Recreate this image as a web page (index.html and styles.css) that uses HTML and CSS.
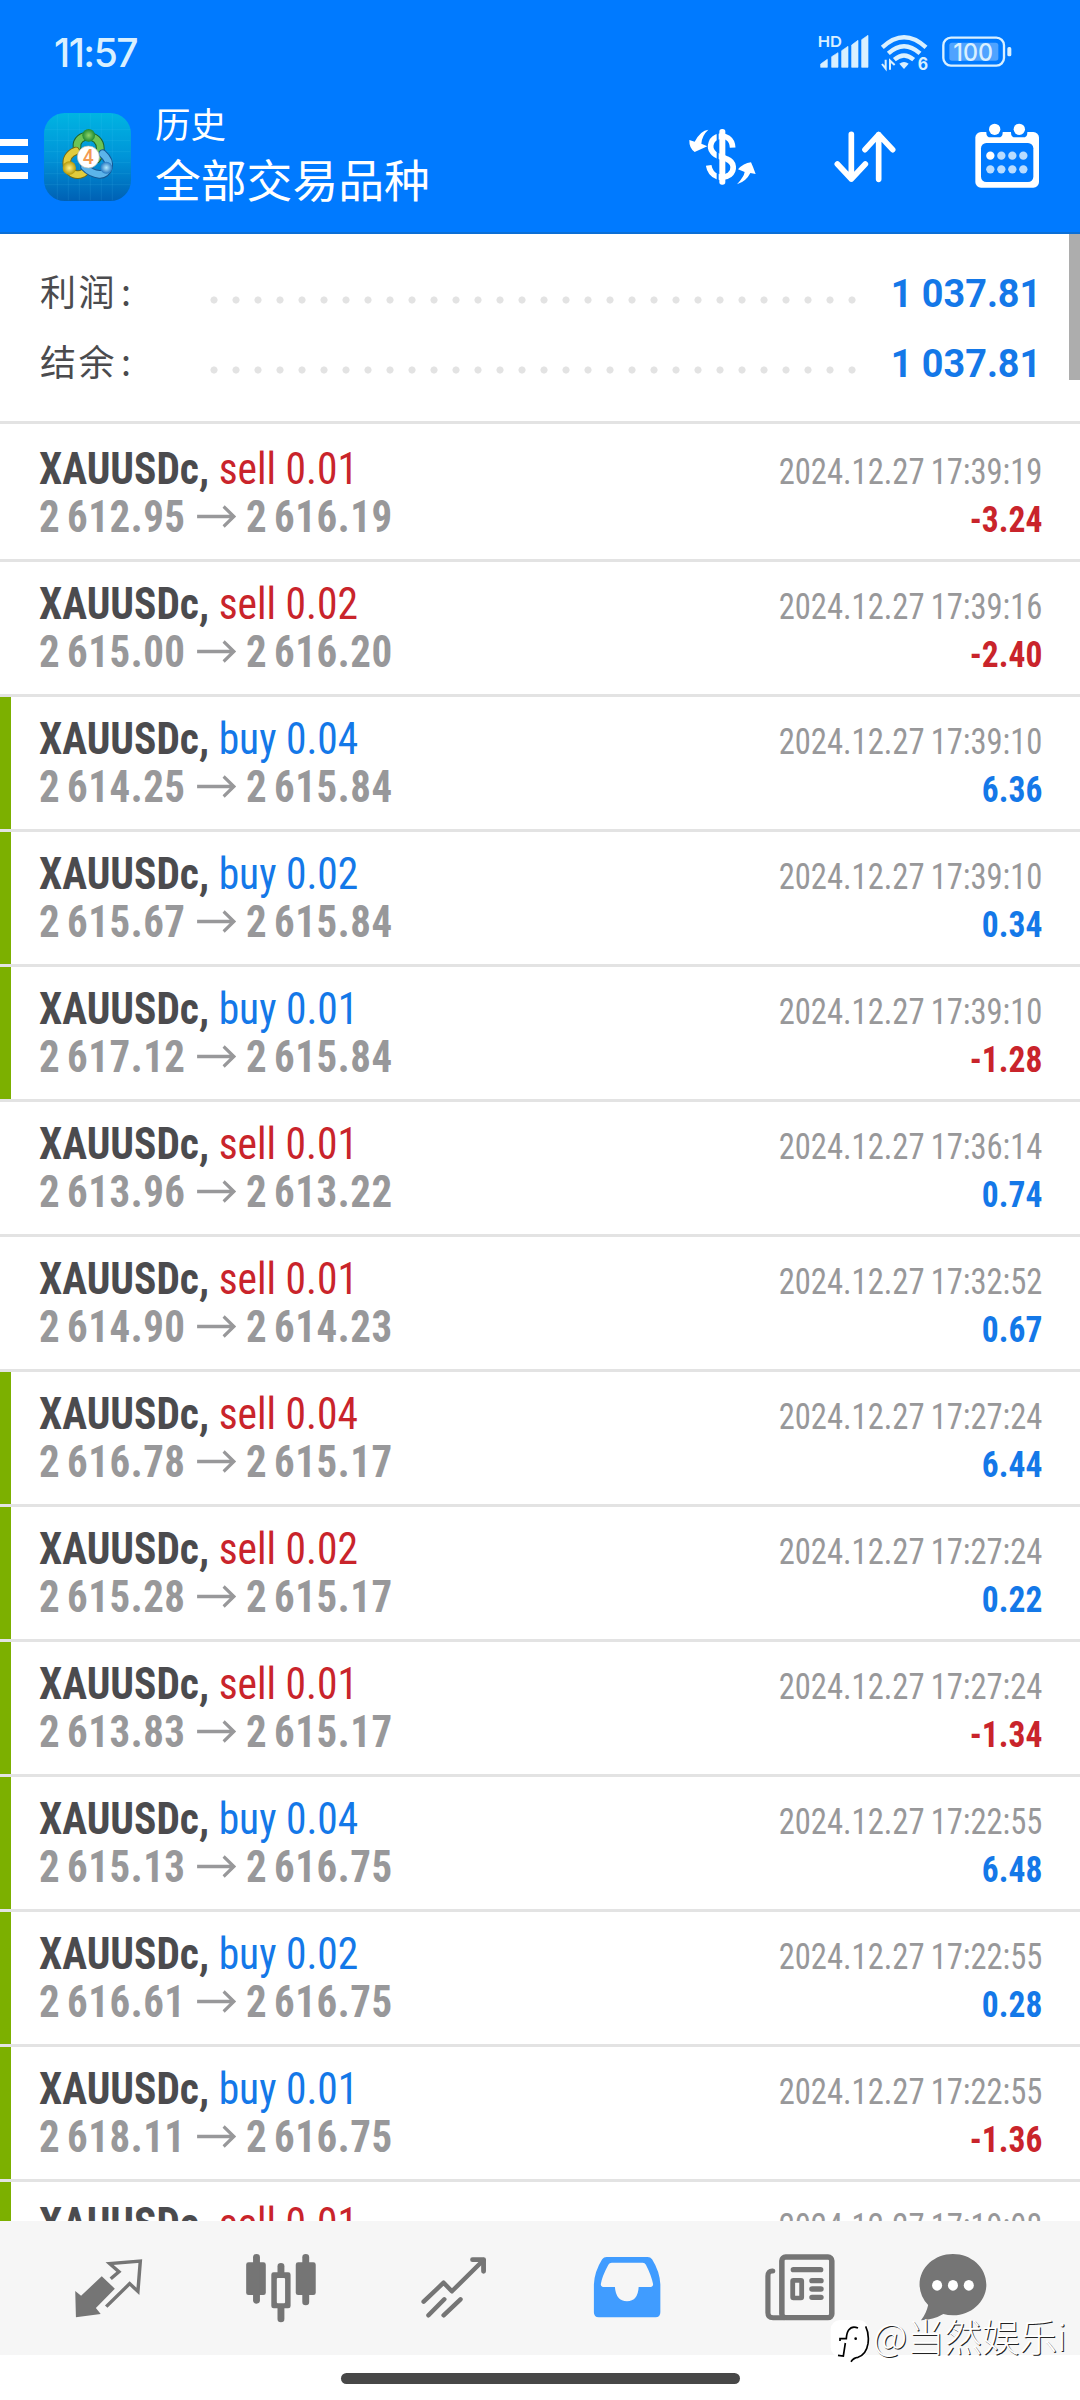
FILE: index.html
```
<!DOCTYPE html>
<html lang="zh">
<head>
<meta charset="utf-8">
<title>历史</title>
<link rel="stylesheet" href="styles.css">
</head>
<body>
<svg width="0" height="0" class="defs">
  <symbol id="arrow" viewBox="0 0 65 32"><path d="M12 14.5H52M40.5 4.5L51.5 14.5L40.5 24.500" fill="none" stroke="currentColor" stroke-width="3.4"/></symbol>
</svg>

<header class="header">
  <div class="status">
    <span class="clock">11:57</span>
    <svg class="status-icons" viewBox="50 40 600 120" fill="#d9f0ff">
      <text x="55" y="83" font-size="45" font-weight="600" font-family="Inter, sans-serif" textLength="73" lengthAdjust="spacingAndGlyphs">HD</text>
      <path d="M64 143V133L84 119V143ZM97 143V111L116 99V143ZM127 143V93L146 80V143ZM157 143V76L176 62V143ZM187 143V60L206 47V143Z" stroke="#d9f0ff" stroke-width="2" stroke-linejoin="round"/>
      <g fill="none" stroke="#d9f0ff" stroke-width="13">
        <path d="M249 83Q314 22 380 83"/><path d="M267 101Q314 58 362 101"/><path d="M285 120Q314 95 343 120"/>
      </g>
      <path d="M300 132Q314 122 328 132L314 148Z"/>
      <path d="M259 120V147L248 133M272 150V123L286 136" fill="none" stroke="#d9f0ff" stroke-width="6"/>
      <text x="355" y="151" font-size="50" font-weight="700" font-family="Inter, sans-serif" textLength="31" lengthAdjust="spacingAndGlyphs">6</text>
      <rect x="432" y="54" width="182" height="84" rx="23" fill="none" stroke="#d9f0ff" stroke-width="7"/>
      <rect x="450" y="69" width="147" height="54" rx="8" fill="#4fa3ff"/>
      <text x="462" y="123" font-size="73" font-weight="500" font-family="Inter, sans-serif" textLength="119" lengthAdjust="spacingAndGlyphs">100</text>
      <rect x="624" y="82" width="12" height="28" rx="5"/>
    </svg>
  </div>
  <div class="toolbar">
    <div class="burger"><i></i><i></i><i></i></div>
    <svg class="logo" viewBox="42 38 261 264">
      <defs>
        <linearGradient id="bg" x1="0" y1="0" x2="0" y2="1"><stop offset="0" stop-color="#00b4e2"/><stop offset=".5" stop-color="#0094d8"/><stop offset="1" stop-color="#0060b4"/></linearGradient>
        <radialGradient id="gg"><stop offset="0" stop-color="#8ed46a"/><stop offset="1" stop-color="#1f8a32"/></radialGradient>
        <radialGradient id="yg"><stop offset="0" stop-color="#fff38a"/><stop offset="1" stop-color="#b59a08"/></radialGradient>
        <radialGradient id="cg"><stop offset="0" stop-color="#b6ebff"/><stop offset="1" stop-color="#2377c2"/></radialGradient>
      </defs>
      <rect x="42" y="38" width="261" height="264" rx="62" fill="url(#bg)"/>
      <path d="M82 42V298M115 40V300M148 40V300M181 40V300M214 40V300M247 40V300M44 88H301M44 121H301M44 154H301M44 187H301M44 220H301M44 253H301" stroke="#5ddcff" stroke-opacity=".17" stroke-width="2"/>
      <g fill="none" stroke-linecap="round">
        <path d="M141 140C137 97 211 95 211 145Q210 163 200 176" stroke="#1d622d" stroke-width="26"/>
        <path d="M141 140C137 97 211 95 211 145Q210 163 200 176" stroke="#6cc456" stroke-width="20"/>
        <path d="M137 152C94 168 108 224 144 223Q155 223 163 216" stroke="#766c11" stroke-width="26"/>
        <path d="M137 152C94 168 108 224 144 223Q155 223 163 216" stroke="#e2cc3c" stroke-width="20"/>
        <path d="M218 160C250 188 235 224 208 222Q183 220 164 200" stroke="#165994" stroke-width="26"/>
        <path d="M218 160C250 188 235 224 208 222Q183 220 164 200" stroke="#5cb4ea" stroke-width="20"/>
      </g>
      <circle cx="176" cy="105" r="19" fill="url(#gg)"/><circle cx="118" cy="203" r="20" fill="url(#yg)"/><circle cx="229" cy="202" r="18" fill="url(#cg)"/>
      <circle cx="175" cy="170" r="33" fill="#fff" stroke="#b9b9a8" stroke-width="2"/>
      <text x="158" y="190" font-family="Roboto, sans-serif" font-size="58" font-weight="500" fill="#f39a52">4</text>
    </svg>
    <div class="titles"><span class="subtitle">历史</span><span class="title">全部交易品种</span></div>
    <svg class="action" viewBox="77 363 216 216">
      <g fill="none" stroke="#fff" stroke-width="17">
        <path d="M217 443C216 415 194 405 177 409C153 413 144 440 157 456C165 469 181 469 199 477C224 487 223 512 208 524C188 539 151 533 145 496"/>
      </g>
      <path d="M169 387H175V553H169Z" fill="#007aff"/>
      <rect x="177" y="387" width="18" height="167" rx="8" fill="#fff"/>
      <path d="M144 389Q121 391 103 425L87 420Q86 444 103 456L141 439L123 431Q125 406 144 389ZM230 553Q251 530 253 516L233 508Q249 490 272 487Q278 500 286 522L270 519Q258 544 230 553Z" fill="#fff"/>
    </svg>
    <svg class="action" viewBox="507 363 216 216" fill="none" stroke="#fff" stroke-width="17" stroke-linecap="round" stroke-linejoin="round">
      <path d="M574 403V537M532 492L574 537L616 492M656 538V404M615 449L656 404L698 449"/>
    </svg>
    <svg class="action" viewBox="932 363 216 216">
      <rect x="945" y="396" width="191" height="167" rx="17" fill="#fff"/>
      <path d="M978 388V398Q978 412 991 412H1014Q1027 412 1027 398V388ZM1052 388V398Q1052 412 1065 412H1088Q1101 412 1101 398V388Z" fill="#007aff"/>
      <rect x="962" y="429" width="157" height="117" rx="16" fill="#007aff"/>
      <g fill="#fff"><circle cx="1003" cy="388" r="17"/><circle cx="1077" cy="388" r="17"/><circle cx="990" cy="467" r="12.500"/></g>
      <g fill="#b8dcff"><circle cx="1023" cy="467" r="12.500"/><circle cx="1056" cy="467" r="12.500"/><circle cx="1089" cy="467" r="12.500"/><circle cx="990" cy="508" r="12.500"/><circle cx="1023" cy="508" r="12.500"/><circle cx="1056" cy="508" r="12.500"/><circle cx="1089" cy="508" r="12.500"/></g>
    </svg>
  </div>
</header>

<main class="content">
  <div class="scrollbar"></div>
  <section class="summary">
    <div class="sum-row"><span class="label">利润<b>:</b></span><span class="dots"></span><span class="total">1 037.81</span></div>
    <div class="sum-row"><span class="label">结余<b>:</b></span><span class="dots"></span><span class="total">1 037.81</span></div>
  </section>
  <ul class="deals">
    <li class="deal"><div class="left"><p class="name"><b>XAUUSDc,</b> <span class="sell">sell 0.01</span></p><p class="prices">2 612.95<svg><use href="#arrow"/></svg>2 616.19</p></div><div class="right"><p class="date">2024.12.27 17:39:19</p><p class="profit neg">-3.24</p></div></li>
    <li class="deal"><div class="left"><p class="name"><b>XAUUSDc,</b> <span class="sell">sell 0.02</span></p><p class="prices">2 615.00<svg><use href="#arrow"/></svg>2 616.20</p></div><div class="right"><p class="date">2024.12.27 17:39:16</p><p class="profit neg">-2.40</p></div></li>
    <li class="deal tp"><div class="left"><p class="name"><b>XAUUSDc,</b> <span class="buy">buy 0.04</span></p><p class="prices">2 614.25<svg><use href="#arrow"/></svg>2 615.84</p></div><div class="right"><p class="date">2024.12.27 17:39:10</p><p class="profit">6.36</p></div></li>
    <li class="deal tp"><div class="left"><p class="name"><b>XAUUSDc,</b> <span class="buy">buy 0.02</span></p><p class="prices">2 615.67<svg><use href="#arrow"/></svg>2 615.84</p></div><div class="right"><p class="date">2024.12.27 17:39:10</p><p class="profit">0.34</p></div></li>
    <li class="deal tp"><div class="left"><p class="name"><b>XAUUSDc,</b> <span class="buy">buy 0.01</span></p><p class="prices">2 617.12<svg><use href="#arrow"/></svg>2 615.84</p></div><div class="right"><p class="date">2024.12.27 17:39:10</p><p class="profit neg">-1.28</p></div></li>
    <li class="deal"><div class="left"><p class="name"><b>XAUUSDc,</b> <span class="sell">sell 0.01</span></p><p class="prices">2 613.96<svg><use href="#arrow"/></svg>2 613.22</p></div><div class="right"><p class="date">2024.12.27 17:36:14</p><p class="profit">0.74</p></div></li>
    <li class="deal"><div class="left"><p class="name"><b>XAUUSDc,</b> <span class="sell">sell 0.01</span></p><p class="prices">2 614.90<svg><use href="#arrow"/></svg>2 614.23</p></div><div class="right"><p class="date">2024.12.27 17:32:52</p><p class="profit">0.67</p></div></li>
    <li class="deal tp"><div class="left"><p class="name"><b>XAUUSDc,</b> <span class="sell">sell 0.04</span></p><p class="prices">2 616.78<svg><use href="#arrow"/></svg>2 615.17</p></div><div class="right"><p class="date">2024.12.27 17:27:24</p><p class="profit">6.44</p></div></li>
    <li class="deal tp"><div class="left"><p class="name"><b>XAUUSDc,</b> <span class="sell">sell 0.02</span></p><p class="prices">2 615.28<svg><use href="#arrow"/></svg>2 615.17</p></div><div class="right"><p class="date">2024.12.27 17:27:24</p><p class="profit">0.22</p></div></li>
    <li class="deal tp"><div class="left"><p class="name"><b>XAUUSDc,</b> <span class="sell">sell 0.01</span></p><p class="prices">2 613.83<svg><use href="#arrow"/></svg>2 615.17</p></div><div class="right"><p class="date">2024.12.27 17:27:24</p><p class="profit neg">-1.34</p></div></li>
    <li class="deal tp"><div class="left"><p class="name"><b>XAUUSDc,</b> <span class="buy">buy 0.04</span></p><p class="prices">2 615.13<svg><use href="#arrow"/></svg>2 616.75</p></div><div class="right"><p class="date">2024.12.27 17:22:55</p><p class="profit">6.48</p></div></li>
    <li class="deal tp"><div class="left"><p class="name"><b>XAUUSDc,</b> <span class="buy">buy 0.02</span></p><p class="prices">2 616.61<svg><use href="#arrow"/></svg>2 616.75</p></div><div class="right"><p class="date">2024.12.27 17:22:55</p><p class="profit">0.28</p></div></li>
    <li class="deal tp"><div class="left"><p class="name"><b>XAUUSDc,</b> <span class="buy">buy 0.01</span></p><p class="prices">2 618.11<svg><use href="#arrow"/></svg>2 616.75</p></div><div class="right"><p class="date">2024.12.27 17:22:55</p><p class="profit neg">-1.36</p></div></li>
    <li class="deal tp"><div class="left"><p class="name"><b>XAUUSDc,</b> <span class="sell">sell 0.01</span></p></div><div class="right"><p class="date">2024.12.27 17:19:08</p></div></li>
  </ul>
</main>

<nav class="tabs">
  <svg viewBox="198 260 232.300 240" preserveAspectRatio="none">
    <path d="M296 348L334 385L279 443L293 461L221 471L219 392L236 406Z" fill="#757575"/>
    <path d="M322 355L346 334L319 310L408 302L401 393L377 370L309 439" fill="none" stroke="#757575" stroke-width="10"/>
  </svg>
  <svg viewBox="700 260 232.300 240" preserveAspectRatio="none">
    <g fill="#757575"><rect x="715" y="306" width="57" height="98" rx="7"/><rect x="735" y="281" width="20" height="149" rx="10"/><rect x="859" y="306" width="58" height="98" rx="7"/><rect x="878" y="281" width="20" height="154" rx="10"/><rect x="806" y="308" width="20" height="178" rx="10"/><rect x="788" y="336" width="56" height="108" rx="7"/></g>
    <rect x="804" y="353" width="24" height="76" rx="3" fill="#f6f6f6"/>
  </svg>
  <svg viewBox="1203 260 232.300 240" preserveAspectRatio="none" fill="none" stroke="#757575" stroke-width="13" stroke-linecap="round" stroke-linejoin="round">
    <path d="M1231 424L1289 367L1313 393L1405 299M1245 465L1291 417M1289 465L1338 417"/><path d="M1373 298H1405V333" stroke-width="14"/>
  </svg>
  <svg viewBox="138 260 232.300 240" preserveAspectRatio="none">
    <path d="M195 290H314Q322 290 327 297Q349 333 351 372V456Q351 471 337 471H172Q158 471 158 456V372Q160 333 182 297Q187 290 195 290ZM210 307Q203 307 200 313Q181 349 178 372Q178 380 184 380H219Q222 422 254 423Q286 422 288 380H324Q330 380 330 372Q325 345 309 313Q306 307 300 307Z" fill="#409cff" fill-rule="evenodd"/>
  </svg>
  <svg viewBox="642 260 232.300 240" preserveAspectRatio="none" fill="none" stroke="#757575" stroke-linecap="round">
    <rect x="705.500" y="290" width="145" height="182" rx="11" stroke-width="16"/>
    <path d="M679 332Q665 331 665 347V457Q665 472 680 472H712" stroke-width="15"/>
    <path d="M739 328H818M793 361H819M793 386H819M793 411H819" stroke-width="16"/>
    <rect x="737" y="360" width="26" height="53" rx="2" stroke-width="14"/>
  </svg>
  <svg class="chat" viewBox="1083 260 232.300 240" preserveAspectRatio="none">
    <path d="M1199 281C1252 281 1296 321 1296 373C1296 425 1250 466 1199 465Q1184 465 1171 461Q1142 479 1106 480Q1122 459 1127 434Q1103 409 1102 373C1102 321 1146 281 1199 281Z" fill="#757575"/>
    <g fill="#fff"><ellipse cx="1153" cy="375" rx="14.500" ry="16"/><ellipse cx="1199" cy="375" rx="14.500" ry="16"/><ellipse cx="1245" cy="375" rx="14.500" ry="16"/></g>
  </svg>
</nav>
<footer class="gesture"><div></div></footer>

<div class="watermark">
  <svg viewBox="30 60 120 135"><rect x="32" y="63" width="113" height="110" rx="28" fill="#fff"/><path d="M114 87Q96 79 86 93Q80 101 79 119H60V126M76 132L70 171L54 169" fill="none" stroke="#000" stroke-width="5"/><path d="M137 82Q148 104 144 134Q139 166 114 175Q101 176 93 188" fill="none" stroke="#000" stroke-width="5"/><circle cx="107" cy="119" r="4" fill="#000"/></svg>
  <span>@当然娱乐i</span>
</div>
</body>
</html>
```
FILE: styles.css
```
* { box-sizing: border-box; margin: 0; padding: 0; }
body {
  width: 1080px; height: 2400px; overflow: hidden; position: relative;
  display: flex; flex-direction: column; background: #fff;
  font-family: Roboto, "Noto Sans CJK SC", sans-serif; color: #4b4b4e;
}
.defs { position: absolute; }
svg { display: block; flex: none; }

.header { height: 234px; flex: none; background: #007aff; border-bottom: 2px solid #0b6fd6; color: #fff; }
.status { height: 105px; padding: 33px 64px 0 54px; display: flex; justify-content: space-between; }
.clock { font: 500 39px/40px Inter, sans-serif; color: #d9f0ff; letter-spacing: -1.5px; }
.status-icons { width: 200px; height: 40px; }
.toolbar { display: flex; height: 127px; align-items: flex-start; }
.burger { width: 28px; margin: 33.500px 16px 0 0; display: flex; flex-direction: column; gap: 9.500px; }
.burger i { height: 7.300px; background: #fff; }
.logo { width: 87px; height: 88px; margin-top: 8px; }
.titles { display: flex; flex-direction: column; margin-left: 24px; flex: 1; font-family: "Noto Sans CJK SC", sans-serif; }
.subtitle { font-size: 35.500px; line-height: 44px; margin-top: -4px; }
.title { font-size: 45.800px; line-height: 60px; margin-top: 2.500px; }
.action { width: 72px; height: 72px; margin: 16px 0 0 71px; }
.action:last-child { margin: 16px 37px 0 70px; }

.content { height: 1987px; flex: none; overflow: hidden; position: relative; }
.scrollbar { position: absolute; right: 0; top: 0; width: 11px; height: 146px; background: #adadad; }
.summary { height: 190px; padding: 24px 43px 0 40px; border-bottom: 3px solid #e3e3e3; }
.sum-row { height: 70px; display: flex; align-items: center; }
.label { width: 170px; font: 36px/70px "Noto Sans CJK SC", sans-serif; letter-spacing: 2.500px; margin-top: -7px; }
.label b { font-weight: 400; margin-left: 4px; }
.dots { width: 660px; height: 8px; margin-left: -7.500px; margin-top: 14px; background: radial-gradient(circle 4px, #e3e3e3 3.200px, transparent 3.900px) 0 0 / 22px 8px; }
.total { margin: 2px 0 0 auto; font-size: 39px; font-weight: 700; line-height: 70px; color: #1478e8; white-space: nowrap; transform: scaleX(.97); transform-origin: 100% 0; }
.sum-row .total { margin-right: -4px; }

.deals { list-style: none; padding-top: 3px; }
.deal {
  height: 135px; border-bottom: 3px solid #e3e3e3; padding: 18px 38px 0 39px;
  display: flex; justify-content: space-between; line-height: 48px;
}
.tp { background: linear-gradient(#7cb000, #7cb000) 0 0 / 11px 132px no-repeat; }
.left, .right { font-stretch: 75%; white-space: nowrap; }
.left { font-size: 44px; }
.name { transform: scaleX(.943); transform-origin: 0 0; }
.prices { display: flex; font-weight: 700; color: #98989a; letter-spacing: .6px; word-spacing: -3.500px; transform: scaleX(.93); transform-origin: 0 0; }
.prices svg { width: 65px; height: 32px; margin: 9px 0 0; }
.right { font-size: 36px; text-align: right; padding-top: 3px; }
.date { color: #98989a; word-spacing: -1.500px; transform: scaleX(.905); transform-origin: 100% 0; }
.profit { font-weight: 700; color: #1478e8; transform: scaleX(.93); transform-origin: 100% 0; }
.buy { color: #1478e8; }
.sell, .neg { color: #c9242b; }

.tabs { height: 134px; flex: none; background: #f6f6f6; padding: 26px 0 0 68px; display: flex; gap: 93px; }
.tabs svg { width: 80px; height: 80px; }
.tabs .chat { margin-left: -20.500px; }
.gesture { height: 45px; display: flex; justify-content: center; padding-top: 18px; }
.gesture div { width: 399px; height: 11px; border-radius: 6px; background: #474747; }

.watermark { position: absolute; left: 830px; top: 2318px; display: flex; font: 300 37.500px/44px "Noto Sans CJK SC", sans-serif; color: #fff; white-space: nowrap; }
.watermark svg { width: 40px; height: 45px; margin-top: 1px; }
.watermark span { margin: -5px 0 0 3px; text-shadow: 1px 1px 0 #222; }
```
